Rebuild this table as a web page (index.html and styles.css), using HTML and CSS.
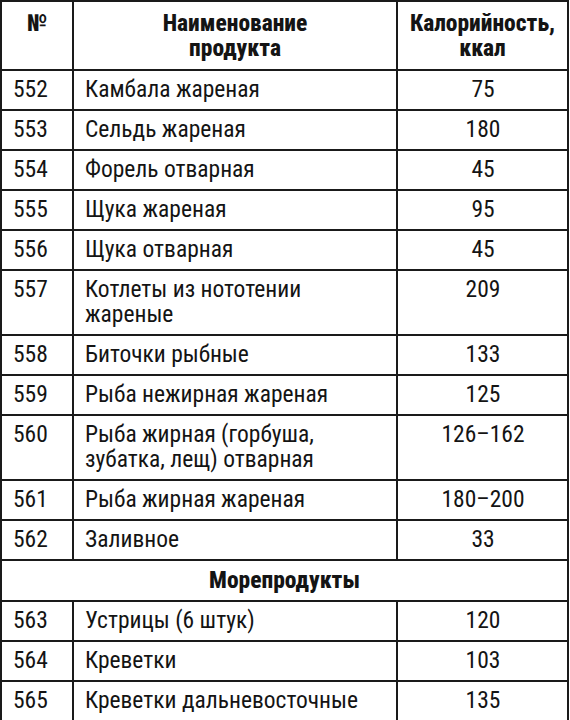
FILE: index.html
```html
<!DOCTYPE html>
<html lang="ru">
<head>
<meta charset="utf-8">
<link rel="stylesheet" href="styles.css">
</head>
<body>
<table class="cal">
  <colgroup>
    <col class="c-num">
    <col class="c-name">
    <col class="c-kcal">
  </colgroup>
  <thead>
    <tr>
      <th>№</th>
      <th>Наименование<br>продукта</th>
      <th>Калорийность,<br>ккал</th>
    </tr>
  </thead>
  <tbody>
    <tr><td>552</td><td>Камбала жареная</td><td class="v">75</td></tr>
    <tr><td>553</td><td>Сельдь жареная</td><td class="v">180</td></tr>
    <tr><td>554</td><td>Форель отварная</td><td class="v">45</td></tr>
    <tr><td>555</td><td>Щука жареная</td><td class="v">95</td></tr>
    <tr><td>556</td><td>Щука отварная</td><td class="v">45</td></tr>
    <tr><td>557</td><td>Котлеты из нототении<br>жареные</td><td class="v">209</td></tr>
    <tr><td>558</td><td>Биточки рыбные</td><td class="v">133</td></tr>
    <tr><td>559</td><td>Рыба нежирная жареная</td><td class="v">125</td></tr>
    <tr><td>560</td><td>Рыба жирная (горбуша,<br>зубатка, лещ) отварная</td><td class="v">126–162</td></tr>
    <tr><td>561</td><td>Рыба жирная жареная</td><td class="v">180–200</td></tr>
    <tr><td>562</td><td>Заливное</td><td class="v">33</td></tr>
    <tr><td class="section" colspan="3">Морепродукты</td></tr>
    <tr><td>563</td><td>Устрицы (6 штук)</td><td class="v">120</td></tr>
    <tr><td>564</td><td>Креветки</td><td class="v">103</td></tr>
    <tr><td>565</td><td>Креветки дальневосточные</td><td class="v">135</td></tr>
  </tbody>
</table>
</body>
</html>
```

FILE: styles.css
```css
html, body {
  margin: 0;
  padding: 0;
  background: #ffffff;
}

body {
  font-family: Roboto, "Liberation Sans", Arial, sans-serif;
  font-stretch: 87%;
  color: #141414;
}

.cal {
  border-collapse: collapse;
  table-layout: fixed;
  width: 569px;
  font-size: 23.5px;
  line-height: 25px;
}

.c-num { width: 72px; }
.c-name { width: 324px; }
.c-kcal { width: 171px; }

.cal th,
.cal td {
  border: 2px solid #1a1a1a;
  vertical-align: top;
  text-align: left;
  padding: 6px 10px 7px 11px;
  white-space: nowrap;
}

.cal th {
  font-weight: 800;
  text-align: center;
  padding: 9px 4px 8px;
  font-size: 23.5px;
}

.cal td.v {
  text-align: center;
}

.cal td.section {
  font-weight: 800;
  text-align: center;
  padding: 7px 10px 7px;
}
```
